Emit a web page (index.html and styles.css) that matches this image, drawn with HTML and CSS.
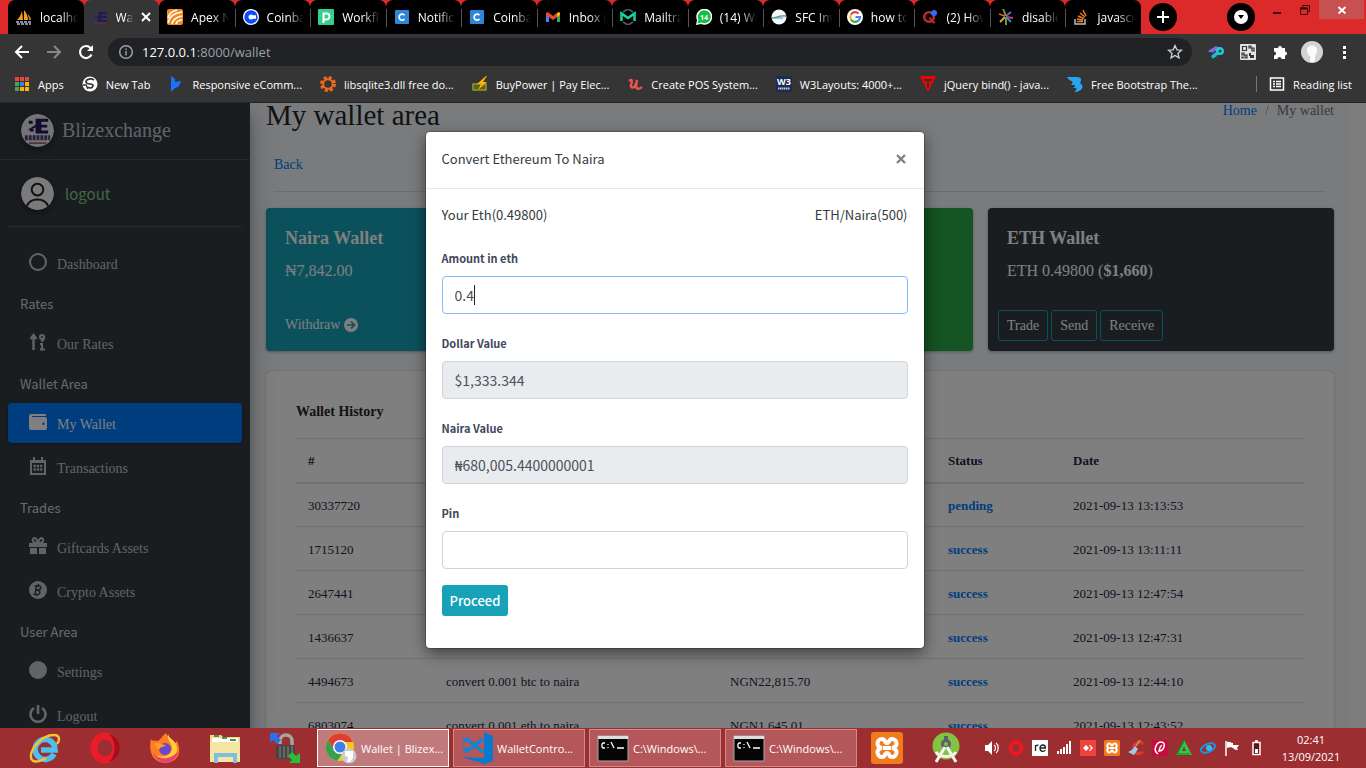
FILE: index.html
```
<!DOCTYPE html>
<html lang="en">
<head>
<meta charset="utf-8">
<title>Wallet | Blizexchange</title>
<link rel="stylesheet" href="styles.css">
</head>
<body>
<header class="browser">
  <div class="tabstrip">
    <div class="tabs">
      <div class="tab"><svg viewBox="0 0 16 16"><path d="M1 11C3 9 5 6 6 2l1 9zM8 11V1c3 3 4 7 4 10z" fill="#f29a1f"/><path d="M12 5c2 2 3 4 3 6h-2z" fill="#c77a1c"/><path d="M0 13h16M1 15h14" stroke="#8a8aa0" stroke-width="2" stroke-dasharray="3 1"/></svg><span class="tab-title">localhost</span></div>
      <div class="tab active"><svg viewBox="0 0 16 16"><path d="M6 3h9v2h-5v2h5v2H9v2h6v2H5l1-4H1l6-2z" fill="#251a55"/><path d="M1 3h3v2H1zM0 10h4v2H1z" fill="#3a2c78"/><path d="M2 14h12" stroke="#70304f"/></svg><span class="tab-title short">Wall</span><button class="tab-close" aria-label="Close tab"><svg viewBox="0 0 10 10"><path d="M1 1l8 8M9 1L1 9" stroke="#fff" stroke-width="2"/></svg></button></div>
      <div class="tab plain"><svg viewBox="0 0 16 16"><rect width="16" height="16" rx="2" fill="#f38b1c"/><path d="M1 9C2 5 5 2 10 1M1 14C2 8 7 4 15 3M5 15C6 10 10 8 15 7M9 15c1-3 3-4 6-4" fill="none" stroke="#fff" stroke-width="1.6"/></svg><span class="tab-title">Apex Ne</span></div>
      <div class="tab"><svg viewBox="0 0 16 16"><circle cx="8" cy="8" r="8" fill="#fff"/><circle cx="8" cy="8" r="4.6" fill="none" stroke="#0a4cf5" stroke-width="4.2"/><path d="M9 6.3h4v3.4H9z" fill="#fff"/></svg><span class="tab-title">Coinbas</span></div>
      <div class="tab"><svg viewBox="0 0 16 16"><rect width="16" height="16" rx="1" fill="#33d08b"/><path d="M5.500 14V4.500h3a2.600 2.600 0 010 6h-3" fill="none" stroke="#fff" stroke-width="2"/></svg><span class="tab-title">Workflo</span></div>
      <div class="tab"><svg viewBox="0 0 16 16"><rect x="1" y="1" width="14" height="14" rx="1" fill="#2b87d8"/><path d="M10.500 6.300a3 3 0 100 3.600" fill="none" stroke="#fff" stroke-width="1.700"/></svg><span class="tab-title">Notifica</span></div>
      <div class="tab"><svg viewBox="0 0 16 16"><rect x="1" y="1" width="14" height="14" rx="1" fill="#2b87d8"/><path d="M10.500 6.300a3 3 0 100 3.600" fill="none" stroke="#fff" stroke-width="1.700"/></svg><span class="tab-title">Coinbas</span></div>
      <div class="tab"><svg viewBox="0 0 16 16"><path d="M1 4v9h3V7z" fill="#4285f4"/><path d="M12 7v6h3V4z" fill="#34a853"/><path d="M1 4l2-1 5 4 5-4 2 1v2l-7 5-7-5z" fill="#ea4335"/><path d="M12 4.500l2-1.500 1 1v2l-3 2z" fill="#fbbc04"/></svg><span class="tab-title">Inbox (2</span></div>
      <div class="tab"><svg viewBox="0 0 16 16"><path d="M3 3l5-3 5 3M3 13l5 3 5-3" fill="none" stroke="#4a5569" stroke-width="2"/><path d="M1.500 12V4.500L8 9l6.500-4.500V12" fill="none" stroke="#16d6a0" stroke-width="2.500"/></svg><span class="tab-title">Mailtrap</span></div>
      <div class="tab"><svg viewBox="0 0 16 16"><path d="M0 16l1-5a8 8 0 114 4z" fill="#fff"/><path d="M1.500 14.500l1-4a6.500 6.500 0 113 3z" fill="#13c143"/><text x="4" y="11" class="badge-text">14</text></svg><span class="tab-title">(14) Wh</span></div>
      <div class="tab"><svg viewBox="0 0 16 16"><circle cx="8" cy="8" r="7.500" fill="#f5f7f8"/><path d="M1 9c4 0 7-3 14-2" fill="none" stroke="#4f9a6a" stroke-width="1.300"/><path d="M4 9h8" stroke="#4b8ac9"/></svg><span class="tab-title">SFC Inve</span></div>
      <div class="tab"><svg viewBox="0 0 16 16"><circle cx="8" cy="8" r="8" fill="#fff"/><g fill="none" stroke-width="2.200"><path d="M11.500 4.500A4.800 4.800 0 004 5.500" stroke="#ea4335"/><path d="M4 5.500a5 5 0 000 5" stroke="#fbbc05"/><path d="M4 10.500a4.800 4.800 0 007.500 1" stroke="#34a853"/><path d="M11.500 11.500A5 5 0 0013 8H8.500" stroke="#4285f4"/></g></svg><span class="tab-title">how to</span></div>
      <div class="tab"><svg viewBox="0 0 16 16"><circle cx="7" cy="8" r="4.800" fill="none" stroke="#b92b27" stroke-width="2.600"/><path d="M7 9c3 0 3 6 6 4" fill="none" stroke="#b92b27" stroke-width="2"/><circle cx="12" cy="4" r="3" fill="#2f6bff"/></svg><span class="tab-title">(2) How</span></div>
      <div class="tab"><svg viewBox="0 0 16 16"><g stroke-width="1.800"><path d="M8 7L5 0" stroke="#6ca63a"/><path d="M8 7l5-4" stroke="#8d5cb5"/><path d="M7 7L1 5" stroke="#d4662e"/><path d="M8 8l7 1" stroke="#ba3c85"/><path d="M7 8l-5 5" stroke="#e2ad35"/><path d="M8 8v8" stroke="#7cad35"/><path d="M8 8l5 5" stroke="#3d8aa9"/></g></svg><span class="tab-title">disable</span></div>
      <div class="tab"><svg viewBox="0 0 16 16"><path d="M2 10v5h10v-5" fill="none" stroke="#bcbbbb" stroke-width="1.500"/><path d="M4 12.500h6M4 10l6 1M5 7l6 2.500M7 4l5 4M10 1l3 6" stroke="#f48024" stroke-width="1.400"/></svg><span class="tab-title">javascri</span></div>
    </div>
    <button class="round-btn new-tab" aria-label="New tab"><svg viewBox="0 0 28 28"><path d="M14 8v12M8 14h12" stroke="#fff" stroke-width="2"/></svg></button>
    <button class="round-btn tab-search" aria-label="Search tabs"><svg viewBox="0 0 28 28"><circle cx="14" cy="14" r="7" fill="#fff"/><path d="M11 12h6l-3 4z" fill="#000"/></svg></button>
    <div class="window-btns">
      <button aria-label="Minimize"><svg viewBox="0 0 12 12"><path d="M2 9h8" stroke="#3a0808" stroke-width="2"/></svg></button>
      <button aria-label="Restore"><svg viewBox="0 0 12 12"><path d="M3.500 3V1.500h7v6H9M1.500 4v6.500h7V4z" fill="none" stroke="#3a0808"/><path d="M1 4.500h8" stroke="#3a0808" stroke-width="2"/></svg></button>
      <button class="win-close" aria-label="Close"><svg viewBox="0 0 12 12"><path d="M2.500 3l7 6.500M9.500 3l-7 6.500" stroke="#fff" stroke-width="1.800"/></svg></button>
    </div>
  </div>
  <div class="toolbar">
    <button class="tool" aria-label="Back"><svg viewBox="0 0 16 16"><path d="M15 8H2M8 2L2 8l6 6" fill="none" stroke="#fff" stroke-width="2"/></svg></button>
    <button class="tool" aria-label="Forward"><svg viewBox="0 0 16 16"><path d="M1 8h13M8 2l6 6-6 6" fill="none" stroke="#888" stroke-width="2"/></svg></button>
    <button class="tool" aria-label="Reload"><svg viewBox="0 0 16 16"><path d="M13.500 10.500a6 6 0 11-1-6.500" fill="none" stroke="#fff" stroke-width="2.200"/><path d="M15 1v6H9z" fill="#fff"/></svg></button>
    <div class="omnibox">
      <svg viewBox="0 0 16 16"><circle cx="8" cy="8" r="6.300" fill="none" stroke="#9aa0a6" stroke-width="1.500"/><path d="M8 7v4.500M8 4.500V6" stroke="#9aa0a6" stroke-width="1.500"/></svg>
      <span class="url"><b>127.0.0.1</b>:8000/wallet</span>
      <svg viewBox="0 0 16 16"><path d="M8 1.500l1.900 4.300 4.600.4-3.500 3.100 1 4.600L8 11.500l-4 2.400 1-4.600L1.500 6.200l4.600-.4z" fill="none" stroke="#d0d3d6" stroke-width="1.300"/></svg>
    </div>
    <div class="extensions">
      <svg viewBox="0 0 16 16"><path d="M0 7l3-2 5-3 4 2-1 3-5 0-1 2-2-1-2 0z" fill="#7d6ce0"/><path d="M9 7l-6 5 2 3 2-2 1 0 3-4z" fill="#18bcd0"/><circle cx="12" cy="7" r="2.800" fill="none" stroke="#18cfd8" stroke-width="2.400"/></svg>
      <svg viewBox="0 0 16 16"><rect width="16" height="16" rx="1" fill="#e4e4e4"/><path d="M2.500 2.500h4v4h-4zM9 2h2v2H9zM12 4h2v3h-2zM2 9h2v2H2zM5 11h2v3H5zM2 13h1v1H2z" fill="none" stroke="#333" stroke-width="1.200"/><path d="M9 9h2v2h3v3h-4v-2H9z" fill="#333"/></svg>
      <svg viewBox="0 0 16 16"><path d="M2 4h4a2 2 0 114 0h3v3.500a2 2 0 110 4V15H9.500a2 2 0 10-4 0H2v-3.500a2 2 0 100-4z" fill="#fff"/></svg>
      <svg class="avatar" viewBox="0 0 22 22"><circle cx="11" cy="11" r="11" fill="#d2d4d3"/><path d="M6 9c0-6 10-6 10 0 0 3-1 5-2 6v6H9v-6c-2-1-3-3-3-6z" fill="#fafafa"/></svg>
      <svg viewBox="0 0 16 16"><path d="M7 2h3v3H7zM7 7h3v3H7zM7 12h3v3H7z" fill="#fff"/></svg>
    </div>
  </div>
  <nav class="bookmarks">
    <a href="#"><svg viewBox="0 0 16 16"><path d="M1 1h4v4H1zM6 1h4v4H6zM11 1h4v4h-4z" fill="#e8453c"/><path d="M1 6h4v4H1zM1 11h4v4H1z" fill="#4aa35a"/><path d="M6 6h4v4H6z" fill="#2f86f6"/><path d="M11 6h4v4h-4zM6 11h4v4H6zM11 11h4v4h-4z" fill="#f5b70a"/><path d="M5.500 0v16M10.500 0v16M0 5.500h16M0 10.500h16" stroke="#353535"/></svg><span>Apps</span></a>
    <a href="#"><svg viewBox="0 0 16 16"><circle cx="8" cy="8" r="7.500" fill="#fff"/><path d="M12 4C9 2 4 3 4 6s8 1 7 4-4 2-5 1" fill="none" stroke="#353535" stroke-width="1.700"/><path d="M1 9h3l2 4" fill="none" stroke="#353535" stroke-width="1.500"/></svg><span>New Tab</span></a>
    <a href="#"><svg viewBox="0 0 16 16"><path d="M3 0l4 3v3c2 0 4-1 6-1-1 5-4 7-6 7l-4 4z" fill="#1a73ff"/></svg><span>Responsive eComm...</span></a>
    <a href="#"><svg viewBox="0 0 16 16"><circle cx="8" cy="8" r="6.500" fill="none" stroke="#f26a1b" stroke-width="3" stroke-dasharray="3 2.100"/><circle cx="8" cy="8" r="4.800" fill="none" stroke="#f26a1b" stroke-width="2"/></svg><span>libsqlite3.dll free do...</span></a>
    <a href="#"><svg viewBox="0 0 16 16"><path d="M0 7h15v8H0z" fill="#5b6418"/><path d="M1 8h13v6H1z" fill="none" stroke="#a7a638"/><path d="M14 0L5 8h4l-3 6 9-8h-4l4-6z" fill="#ffb400"/></svg><span>BuyPower | Pay Elec...</span></a>
    <a href="#"><svg viewBox="0 0 16 16"><path d="M2 5c4-3 3 1 2 4s3 4 5-1l1-4-1 6c0 4 4 3 6 1" fill="none" stroke="#ec5252" stroke-width="2.400"/></svg><span>Create POS System...</span></a>
    <a href="#"><svg viewBox="0 0 16 16"><rect width="16" height="16" fill="#1c2c55"/><text x="1" y="9" class="w3-text">W3</text><path d="M2 12.500h12" stroke="#c4c8d8" stroke-width="2" stroke-dasharray="1.500 .5"/></svg><span>W3Layouts: 4000+...</span></a>
    <a href="#"><svg viewBox="0 0 16 16"><path d="M0 0h16L8 16z" fill="#f50000"/><path d="M4 4h8M8 4v8" stroke="#333" stroke-width="2"/></svg><span>jQuery bind() - java...</span></a>
    <a href="#"><svg viewBox="0 0 16 16"><path d="M0 1h9c6 0 6 3 4 6 5 3 2 9-6 9 2-1 3-3 2-4H6c2-1 2-2 2-3H4c1-1 2-2 1-4C3 5 1 3 0 1z" fill="#27a4f2"/></svg><span>Free Bootstrap The...</span></a>
    <a href="#" class="reading"><svg viewBox="0 0 16 16"><path d="M1.500 2h13v12h-13zM4 5.500h2M7 5.500h5M4 8h2M7 8h5M4 10.500h2M7 10.500h5" fill="none" stroke="#fff" stroke-width="1.500"/></svg><span>Reading list</span></a>
  </nav>
</header>

<div class="page">
  <aside class="sidebar">
    <a class="brand" href="#"><svg viewBox="0 0 34 34"><circle cx="17" cy="17" r="17" fill="#e8e8ea"/><path d="M15 5h13v3h-7v3h6v3h-6v3h7v3H15v-6l-9 3 9-6z" fill="#241a5c"/><path d="M8 7h4v3H8zM9 15h4v3H9z" fill="#241a5c"/><path d="M4 24.500h26" stroke="#4a4280" stroke-width="5" stroke-dasharray="3 1"/><path d="M8 30h18" stroke="#b06a68" stroke-width="2"/></svg><span>Blizexchange</span></a>
    <a class="user" href="#"><svg viewBox="0 0 34 34"><circle cx="17" cy="17" r="17" fill="#f4f4f4"/><circle cx="17" cy="13" r="6" fill="none" stroke="#222" stroke-width="2"/><path d="M6 30c4-9 18-9 22 0" fill="none" stroke="#222" stroke-width="2"/></svg><span>logout</span></a>
    <nav class="menu">
      <a href="#"><svg viewBox="0 0 18 18"><circle cx="9" cy="9" r="8" fill="none" stroke="currentColor" stroke-width="2"/></svg>Dashboard</a>
      <h2>Rates</h2>
      <a href="#"><svg viewBox="0 0 18 18"><path d="M4.500 17V3M1.500 6l3-4 3 4" fill="none" stroke="currentColor" stroke-width="2.400"/><circle cx="13" cy="4" r="2" fill="none" stroke="currentColor" stroke-width="2"/><path d="M15 4c0 2-1 4-3 4M11 11h2v5M11 16.500h5" fill="none" stroke="currentColor" stroke-width="2"/></svg>Our Rates</a>
      <h2>Wallet Area</h2>
      <a href="#" class="current"><svg viewBox="0 0 18 18"><path fill-rule="evenodd" d="M2 1h14a1 1 0 011 1v1H3v1h13a2 2 0 012 2v9a2 2 0 01-2 2H2a2 2 0 01-2-2V3a2 2 0 012-2zm12.500 8.500a1.200 1.200 0 100 2.400 1.200 1.200 0 000-2.400z" fill="currentColor"/></svg>My Wallet</a>
      <a href="#"><svg viewBox="0 0 18 18"><path d="M2 4h14v13H2z" fill="none" stroke="currentColor" stroke-width="2"/><path d="M2 5h14M5 0v4M13 0v4" stroke="currentColor" stroke-width="2"/><path d="M4.500 9h9M4.500 12.500h9" stroke="currentColor" stroke-width="2.500" stroke-dasharray="2.300 1"/></svg>Transactions</a>
      <h2>Trades</h2>
      <a href="#"><svg viewBox="0 0 18 18"><path d="M0 6h18v4H0zM1 11h7v6H1zM10 11h7v6h-7z" fill="currentColor"/><path d="M9 6C4 6 3 4 4 2s4-1 5 4c1-5 4-6 5-4s0 4-5 4z" fill="none" stroke="currentColor" stroke-width="1.900"/></svg>Giftcards Assets</a>
      <a href="#"><svg viewBox="0 0 18 18"><circle cx="9" cy="9" r="9" fill="currentColor"/><path d="M7.500 4.500L6 13.500M5.500 5h4.500c3 0 2 4-1 4H7c5 0 5 4.500 1 4.500H4.500M9.500 3l-.4 2M8 13l-.4 2" fill="none" stroke="#343a40" stroke-width="1.500"/></svg>Crypto Assets</a>
      <h2>User Area</h2>
      <a href="#"><svg viewBox="0 0 18 18"><circle cx="9" cy="9" r="9" fill="currentColor"/></svg>Settings</a>
      <a href="#"><svg viewBox="0 0 18 18"><path d="M5 3a7.500 7.500 0 108 0M9 0v9" fill="none" stroke="currentColor" stroke-width="2.600"/></svg>Logout</a>
    </nav>
  </aside>
  <main class="content">
    <div class="title-row">
      <h1>My wallet area</h1>
      <nav class="crumbs"><a href="#">Home</a><i>/</i><span>My wallet</span></nav>
    </div>
    <div class="back-row"><a href="#">Back</a></div>
    <section class="cards">
      <article class="card teal">
        <h3>Naira Wallet</h3>
        <p>₦7,842.00</p>
        <a class="withdraw" href="#">Withdraw <svg viewBox="0 0 14 14"><circle cx="7" cy="7" r="7" fill="#fff"/><path d="M3 7h7M7 3.500L10.500 7 7 10.500" fill="none" stroke="#17a2b8" stroke-width="1.700"/></svg></a>
      </article>
      <article class="card green"></article>
      <article class="card dark">
        <h3>ETH Wallet</h3>
        <p>ETH 0.49800 (<b>$1,660</b>)</p>
        <div class="card-actions"><button>Trade</button><button>Send</button><button>Receive</button></div>
      </article>
    </section>
    <section class="history">
      <h4>Wallet History</h4>
      <table>
        <colgroup><col class="c-id"><col class="c-desc"><col class="c-amt"><col class="c-status"><col></colgroup>
        <thead><tr><th>#</th><th></th><th></th><th>Status</th><th>Date</th></tr></thead>
        <tbody>
          <tr><td>30337720</td><td></td><td></td><td><a href="#">pending</a></td><td>2021-09-13 13:13:53</td></tr>
          <tr><td>1715120</td><td></td><td></td><td><a href="#">success</a></td><td>2021-09-13 13:11:11</td></tr>
          <tr><td>2647441</td><td></td><td></td><td><a href="#">success</a></td><td>2021-09-13 12:47:54</td></tr>
          <tr><td>1436637</td><td></td><td></td><td><a href="#">success</a></td><td>2021-09-13 12:47:31</td></tr>
          <tr><td>4494673</td><td>convert 0.001 btc to naira</td><td>NGN22,815.70</td><td><a href="#">success</a></td><td>2021-09-13 12:44:10</td></tr>
          <tr><td>6803074</td><td>convert 0.001 eth to naira</td><td>NGN1,645.01</td><td><a href="#">success</a></td><td>2021-09-13 12:43:52</td></tr>
        </tbody>
      </table>
    </section>
  </main>
  <div class="gutter"></div>
  <div class="backdrop">
    <form class="modal" role="dialog" aria-labelledby="dlg-title">
      <div class="modal-head"><h5 id="dlg-title">Convert Ethereum To Naira</h5><button type="button" aria-label="Close"><svg viewBox="0 0 10 10"><path d="M1 1l8 8M9 1L1 9" stroke="#7f7f7f" stroke-width="2.400"/></svg></button></div>
      <div class="modal-body">
        <div class="rates"><span>Your Eth(0.49800)</span><span>ETH/Naira(500)</span></div>
        <div class="field"><label for="amount">Amount in eth</label><div class="entry"><input class="focused" id="amount" type="text" value="0.4"><span class="caret"></span></div></div>
        <div class="field"><label for="dollar">Dollar Value</label><input id="dollar" type="text" value="$1,333.344" readonly></div>
        <div class="field"><label for="naira">Naira Value</label><input id="naira" type="text" value="₦680,005.4400000001" readonly></div>
        <div class="field"><label for="pin">Pin</label><input id="pin" type="password"></div>
        <button class="proceed" type="button">Proceed</button>
      </div>
    </form>
  </div>
</div>

<footer class="taskbar">
  <div class="pinned">
    <svg viewBox="0 0 32 32"><path d="M25 22a10 10 0 11.500-8l.5 4H12" fill="none" stroke="#4cc1f0" stroke-width="5.500"/><path d="M3 28C-2 20 12 3 25 3c6 0 6 5 3 9" fill="none" stroke="#f6c32c" stroke-width="2.500"/><path d="M3 28c3 3 9 1 14-2" fill="none" stroke="#f6c32c" stroke-width="2.500"/></svg>
    <svg viewBox="0 0 32 32"><ellipse cx="16" cy="16" rx="11" ry="12" fill="none" stroke="#ea1c2c" stroke-width="7"/><path d="M20 2c15 5 14 24 0 28 8-7 7-21 0-28z" fill="#a80d1d"/></svg>
    <svg viewBox="0 0 32 32"><path d="M2 7c2 3 5 1 7 2 3-2 4-5 8-8 2 5 8 6 9 10l2-2c6 13-1 22-12 22C4 31-1 20 2 7z" fill="#ff7b21"/><path d="M19 2c2 7 10 6 9 17-2 9-15 13-21 4 9 4 17-1 16-8-1-5-5-6-4-13z" fill="#ffce38"/><path d="M4 20c4 8 18 9 25-1-2 15-21 16-25 1z" fill="#ee3d70"/><circle cx="16" cy="17" r="6" fill="#6a47cc"/><path d="M5 12c5-3 7 1 12 1-3 3-6 1-7 5z" fill="#ff9c2a"/></svg>
    <svg viewBox="0 0 32 32"><path d="M1 3h11l2 2h17v25H1z" fill="#f1d987"/><path d="M3 6h26v4H3z" fill="#fff"/><path d="M5 4h5M13 6h5M21 8h6" stroke="#3a9d4c" stroke-width="2"/><path d="M1 10h30v20H1z" fill="#f6e6a4"/><path d="M5 31V21h23v10h-4v-6H9v6z" fill="#7cc0e4"/></svg>
    <svg viewBox="0 0 32 32"><path d="M11 12V9c0-8 12-8 12 0v5" fill="none" stroke="#a5a5a5" stroke-width="3.500"/><rect x="7" y="13" width="19" height="14" rx="2" fill="#454545"/><path d="M11 14v12M15 14v12M19 14v12M23 14v12" stroke="#8b8b8b"/><path d="M1 1h10L8 4l4 4-4 4-4-4-3 3z" fill="#2b6fe8"/><path d="M31 31H20l3-3-4-4 4-4 4 4 4-3z" fill="#24c13a"/></svg>
  </div>
  <div class="tasks">
    <button class="task on"><svg viewBox="0 0 32 32"><circle cx="15" cy="15" r="14" fill="#f7c51c"/><path d="M3 8a14 14 0 0125 2H15l-6 8z" fill="#df3e31"/><path d="M3 8l8 13 6 1-5 7A14 14 0 013 8z" fill="#35a052"/><circle cx="15" cy="15" r="7" fill="#fff"/><circle cx="15" cy="15" r="5.500" fill="#3f7fe8"/><circle cx="24" cy="24" r="7.500" fill="#ccc"/><path d="M20 19h8v7l-3 4h-3l1-5-3-1z" fill="#fff"/></svg><span>Wallet | Blizex...</span></button>
    <button class="task"><svg viewBox="0 0 32 32"><path d="M23 0l9 4v25l-8 3L0 25l23 1z" fill="#087acb"/><path d="M22 7L6 19l-4-3M2 9l4-2 16 13" fill="none" stroke="#1684d4" stroke-width="3.500"/></svg><span>WalletContro...</span></button>
    <button class="task"><svg viewBox="0 0 32 32"><path d="M1 4h30v25H1z" fill="#050505" stroke="#aaa"/><path d="M1 4h30v3H1z" fill="#ddd"/><path d="M8 11H6l-1 1v3l1 1h2M11 12v1M11 15v1M14 10l3 6M20 16h7" fill="none" stroke="#fff" stroke-width="1.300"/></svg><span>C:\Windows\...</span></button>
    <button class="task"><svg viewBox="0 0 32 32"><path d="M1 4h30v25H1z" fill="#050505" stroke="#aaa"/><path d="M1 4h30v3H1z" fill="#ddd"/><path d="M8 11H6l-1 1v3l1 1h2M11 12v1M11 15v1M14 10l3 6M20 16h7" fill="none" stroke="#fff" stroke-width="1.300"/></svg><span>C:\Windows\...</span></button>
  </div>
  <div class="apps">
    <svg viewBox="0 0 32 32"><rect width="32" height="32" rx="3" fill="#f07a1c"/><path d="M11 16c-7-1-5-9 0-9 4 0 2 4 5 4s1-4 5-4c5 0 7 8 0 9 7 1 5 9 0 9-4 0-2-4-5-4s-1 4-5 4c-5 0-7-8 0-9zM12 16h8" fill="none" stroke="#fff" stroke-width="4"/></svg>
    <svg viewBox="0 0 32 32"><circle cx="16" cy="14" r="13.500" fill="#84c341"/><circle cx="16" cy="12" r="3.500" fill="none" stroke="#56616a" stroke-width="3"/><path d="M16 4v4" stroke="#56616a" stroke-width="4"/><path d="M15 15L6 30M17 15l9 15M6 20c4 6 16 6 20 0" fill="none" stroke="#f4f4f4" stroke-width="3"/></svg>
  </div>
  <div class="tray">
    <svg viewBox="0 0 16 16"><path d="M1 5h3l4-4v14l-4-4H1z" fill="#fff"/><path d="M10 5c2 1 2 5 0 6M12 3c3 2 3 8 0 10" fill="none" stroke="#fff" stroke-width="1.200"/></svg>
    <svg viewBox="0 0 16 16"><ellipse cx="8" cy="8" rx="5.500" ry="6" fill="none" stroke="#ea1a24" stroke-width="4"/></svg>
    <svg viewBox="0 0 16 16"><path d="M0 0h16v16H0z" fill="#fff"/><path d="M3.500 11V5M3.500 7c0-1 1-2 3-1.800M8 8h5.500c0-4-5.500-4-5.500 0s4 4 5.300 2" fill="none" stroke="#222" stroke-width="1.300"/></svg>
    <svg viewBox="0 0 16 16"><path d="M1 11h2v3H1zM4 9h2v5H4zM7 7h2v7H7zM10 4h2v10h-2zM13 1h2v13h-2z" fill="#fff"/></svg>
    <svg viewBox="0 0 16 16"><path d="M0 0h16v16H0z" fill="#ef443b"/><path d="M6 5l3 3-3 3-3-3zM9 5l1 0 3 3-3 3H9l2-3z" fill="#fff"/></svg>
    <svg viewBox="0 0 32 32"><rect width="32" height="32" rx="3" fill="#f07a1c"/><path d="M11 16c-7-1-5-9 0-9 4 0 2 4 5 4s1-4 5-4c5 0 7 8 0 9 7 1 5 9 0 9-4 0-2-4-5-4s-1 4-5 4c-5 0-7-8 0-9zM12 16h8" fill="none" stroke="#fff" stroke-width="4"/></svg>
    <svg viewBox="0 0 16 16"><path d="M15 4c-3-4-10-1-9 5s6 5 9 3" fill="none" stroke="#e0382f" stroke-width="3"/><path d="M12 0L8 6" stroke="#c98a45" stroke-width="2"/><path d="M7 6l3 3-4 6-6-3c3-1 5-3 7-6z" fill="#9fc8e8"/></svg>
    <svg viewBox="0 0 16 16"><path d="M0 0h16v16H0z" fill="#c40c3f"/><path d="M6 14C0 10 5 2 9 2c6 0 3 9-2 9 1-2 0-4 3-6" fill="none" stroke="#fff" stroke-width="1.500"/></svg>
    <svg viewBox="0 0 16 16"><path d="M8 0l8 15H0z" fill="#22cf45"/><path d="M8 6l2 5H6z" fill="#9c2d31"/><path d="M8 1l-7 13h13" fill="none" stroke="#0c8a28" stroke-width="1.200"/></svg>
    <svg viewBox="0 0 16 16"><ellipse cx="8" cy="8" rx="7.500" ry="4" transform="rotate(-25 8 8)" fill="none" stroke="#1698dc" stroke-width="2"/><circle cx="9" cy="8" r="3" fill="#3fb6ef"/></svg>
    <svg viewBox="0 0 16 16"><path d="M2 1v15" stroke="#fff" stroke-width="1.500"/><path d="M3 2c3-1 4 1 6 1v2h6l-2 3 1 2c-3 0-4-1-5-2s-4-1-6 0z" fill="#fff"/></svg>
    <svg viewBox="0 0 16 16"><path d="M5 2.500h7v12H5zM7 1h3" fill="#5a1517" stroke="#fff" stroke-width="1.500"/><path d="M7 9h3v4H7z" fill="#fff"/></svg>
  </div>
  <div class="clock"><span>02:41</span><span>13/09/2021</span></div>
</footer>
</body>
</html>
```
FILE: styles.css
```
:root {
  --ui: "Open Sans", "Noto Sans", sans-serif;
  --serif: "Liberation Serif", serif;
  --sans: "Noto Sans CJK SC", "Noto Sans", sans-serif;
}
* { box-sizing: border-box; }
body { margin: 0; height: 100vh; display: flex; flex-direction: column; overflow: hidden; font-family: var(--serif); font-size: 14px; }
a { text-decoration: none; color: #007bff; }
button { border: 0; padding: 0; background: none; font: inherit; color: inherit; }
h1, h2, h3, h4, h5, p { margin: 0; font-weight: normal; }
svg { flex: none; display: block; }

/* browser frame */
.browser { flex: none; background: #353535; color: #fff; font-family: var(--ui); font-size: 12px; border-bottom: 1px solid #242424; }
.tabstrip { display: flex; height: 34px; background: #dc2a2a; padding-left: 8px; }
.tabs { flex: 0 1 1133px; min-width: 0; display: grid; grid-template-columns: repeat(15, minmax(0, 1fr)); }
.tab { display: flex; align-items: center; gap: 8px; padding: 0 6px 0 8px; background: #000; border-radius: 7px 7px 0 0; position: relative; min-width: 0; }
.tab svg { width: 16px; height: 16px; }
.tab::before { content: ""; position: absolute; left: 0; top: 9px; height: 18px; border-left: 1px solid #555; }
.tab:first-child::before, .tab.active::before, .tab.plain::before { display: none; }
.tab.active { background: #353535; }
.tab-title { flex: 1; min-width: 0; overflow: hidden; white-space: nowrap; mask-image: linear-gradient(90deg, #000 55%, transparent); }
.tab-title.short { flex: 0 0 17px; }
.tab .tab-close svg { width: 10px; height: 10px; }
.badge-text { font: bold 7px var(--ui); fill: #fff; }
.w3-text { font: bold 9px var(--ui); fill: #fff; }
.round-btn { width: 28px; height: 28px; border-radius: 50%; background: #000; margin-top: 3px; }
.round-btn svg { width: 28px; height: 28px; }
.new-tab { margin-left: 8px; }
.tab-search { margin-left: auto; }
.window-btns { display: flex; align-items: flex-start; margin-left: 8px; }
.window-btns button { width: 28px; height: 19px; display: grid; place-items: center; }
.window-btns svg { width: 12px; height: 12px; }
.window-btns .win-close { width: 45px; margin: 0 2px 0 0; background: #c75050; }
.toolbar { display: flex; align-items: center; height: 36px; padding: 0 14px; gap: 16px; }
.tool svg { width: 16px; height: 16px; }
.omnibox { flex: 1; display: flex; align-items: center; gap: 8px; height: 28px; margin-left: -2px; padding: 0 9px 0 10px; border-radius: 14px; background: #202124; }
.omnibox svg { width: 16px; height: 16px; }
.url { flex: 1; font-size: 13px; color: #9aa0a6; }
.url b { font-weight: normal; color: #fff; }
.extensions { display: flex; align-items: center; gap: 16px; }
.extensions svg { width: 16px; height: 16px; }
.extensions .avatar { width: 22px; height: 22px; margin: 0 -3px; }
.bookmarks { display: flex; align-items: center; height: 32px; padding: 0 14px 4px; gap: 18px; font-size: 11px; }
.bookmarks a { display: flex; align-items: center; gap: 8px; color: #fff; white-space: nowrap; }
.bookmarks svg { width: 16px; height: 16px; }
.bookmarks .reading { margin-left: auto; padding-left: 12px; border-left: 1px solid #777; }

/* application */
.page { flex: 1; min-height: 0; display: flex; position: relative; overflow: hidden; background: #f4f6f9; }
.sidebar { flex: none; width: 250px; background: #343a40; color: #c2c7d0; box-shadow: 0 14px 28px rgba(0,0,0,.25), 0 10px 10px rgba(0,0,0,.22); z-index: 1; }
.sidebar a { display: flex; align-items: center; color: #c2c7d0; }
.sidebar .brand { height: 57px; padding: 2px 21px 3px; gap: 8px; font-size: 20px; border-bottom: 1px solid #4b545c; }
.brand svg, .user svg { width: 33px; height: 33px; border-radius: 50%; box-shadow: 0 3px 6px rgba(0,0,0,.4); }
.sidebar .user { height: 67px; margin: 0 8px; padding: 0 13px; gap: 11px; font-family: var(--sans); border-bottom: 1px solid #4f5962; }
.user span { color: #7fd087; font-size: 15px; }
.menu { padding: 16px 8px 0; }
.menu a { height: 40px; padding: 4px 0 0 21px; gap: 10px; margin-bottom: 4px; border-radius: 4px; white-space: nowrap; }
.menu svg { width: 18px; height: 18px; margin-bottom: 7px; }
.menu .current { background: #007bff; color: #fff; box-shadow: 0 1px 3px rgba(0,0,0,.3); }
.menu h2 { height: 36px; padding-left: 12px; font: 13px/34px var(--sans); color: #d0d4db; }
.content { flex: 1; min-width: 0; padding: 0 15px 0 16px; }
.gutter { flex: none; width: 17px; background: #fafafa; }
.title-row { display: flex; justify-content: space-between; height: 47px; }
.title-row h1 { font-size: 29px; line-height: 24px; color: #212529; }
.crumbs { display: flex; gap: 8px; line-height: 16px; color: #6c757d; }
.crumbs i { font-style: normal; opacity: .7; }
.back-row { margin: 0 8px; height: 42px; padding-top: 3px; line-height: 24px; border-bottom: 1px solid #d8dbde; }
.cards { display: grid; grid-template-columns: repeat(3, minmax(0, 1fr)); gap: 15px; margin-top: 16px; }
.card { display: flex; flex-direction: column; align-items: flex-start; height: 143px; padding: 18px 19px 10px; border-radius: 4px; color: #fff; box-shadow: 0 1px 3px rgba(0,0,0,.3); }
.teal { background: #17a2b8; }
.green { background: #28a745; }
.dark { background: #343a40; }
.card h3 { font-size: 18px; font-weight: bold; line-height: 24px; }
.card p { font-size: 16px; line-height: 24px; margin-top: 9px; }
.withdraw { display: flex; align-items: center; gap: 4px; margin-top: auto; color: #fff; line-height: 32px; }
.withdraw svg { width: 14px; height: 14px; }
.card-actions { display: flex; gap: 3px; margin: auto 0 0 -9px; }
.card-actions button { height: 31px; padding: 0 8px; border: 1px solid #17a2b8; border-radius: 3px; }
.history { margin-top: 20px; padding: 31px 30px 60px; background: #fff; border-radius: 6px; box-shadow: 0 0 2px rgba(0,0,0,.25); color: #212529; }
.history h4 { font-weight: bold; line-height: 20px; margin-bottom: 16px; }
table { width: 100%; table-layout: fixed; border-collapse: collapse; font-size: 13px; color: #1e2746; }
.c-id { width: 138px; }
.c-desc { width: 284px; }
.c-amt { width: 218px; }
.c-status { width: 125px; }
th, td { height: 44px; padding: 2px 12px 0; text-align: left; border-top: 1px solid #dee2e6; }
thead th { border-bottom: 2px solid #dee2e6; }
td a { font-weight: bold; }

/* dialog */
.backdrop { position: absolute; inset: 0; z-index: 2; padding: 29px 17px 0 0; background: rgba(0,0,0,.5); }
.modal { max-width: 498px; margin: 0 auto; background: #fff; border-radius: 4px; box-shadow: 0 5px 15px rgba(0,0,0,.5), 0 0 0 1px rgba(0,0,0,.2); font-family: var(--sans); color: #343a40; }
.modal-head { display: flex; justify-content: space-between; align-items: center; height: 57px; padding: 0 18px 3px 16px; border-bottom: 1px solid #e5e8eb; }
.modal-head h5 { font-size: 13px; }
.modal-head svg { width: 10px; height: 10px; }
.modal-body { padding: 16px 16px 32px; }
.rates { display: flex; justify-content: space-between; font-size: 13px; line-height: 20px; margin-bottom: 24px; }
.field { margin-bottom: 20px; }
.field:last-of-type { margin-bottom: 16px; }
.field label { display: block; font-size: 11px; font-weight: bold; line-height: 19px; margin-bottom: 8px; color: #3f475c; }
.field input { display: block; width: 100%; height: 38px; padding: 0 12px; border: 1px solid #ced4da; border-radius: 4px; font: 14px var(--sans); color: #495057; background: #fff; outline: 0; }
.field input[readonly] { background: #e9ecef; }
.field .focused { border-color: #80bdff; }
.entry { position: relative; }
.caret { position: absolute; left: 32px; top: 9px; height: 20px; border-left: 1px solid #222; }
.proceed { height: 31px; padding: 0 8px; border-radius: 3px; background: #17a2b8; color: #fff; font-size: 13px; font-weight: 500; }

/* desktop taskbar */
.taskbar { flex: none; display: flex; align-items: center; height: 40px; background: #9c2d31; color: #fff; font-family: var(--ui); font-size: 11px; }
.pinned { display: flex; gap: 28px; padding: 0 16px 0 29px; }
.pinned svg, .apps svg { width: 32px; height: 32px; }
.tasks { display: flex; gap: 4px; height: 38px; }
.task { display: flex; align-items: center; gap: 4px; width: 132px; padding: 0 7px; border: 1px solid #d38a8b; background: #b4575a; white-space: nowrap; }
.task.on { background: #c07a7c; border-color: #fff; }
.task svg { width: 32px; height: 32px; }
.apps { display: flex; gap: 27px; margin-left: 14px; }
.tray { display: flex; gap: 8px; margin-left: 22px; }
.tray svg { width: 16px; height: 16px; }
.clock { display: flex; flex-direction: column; align-items: center; flex: 1; padding-right: 8px; line-height: 17px; }
```
